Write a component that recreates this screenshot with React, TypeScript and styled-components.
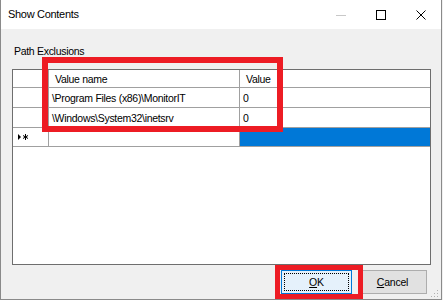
import React from "react";
import styled, { createGlobalStyle } from "styled-components";

const Global = createGlobalStyle`
  html, body { margin: 0; padding: 0; background: #f0f0f0; }
  body { font-family: "Liberation Sans", Arial, sans-serif; font-size: 10.5px; color: #000; }
`;

const Window = styled.div`
  position: relative;
  width: 442px;
  height: 300px;
  box-sizing: border-box;
  border: 1px solid #8a8a8a;
  border-top: none;
  display: flex;
  flex-direction: column;
  background: #f0f0f0;
  overflow: hidden;
`;

const TitleBar = styled.div`
  height: 29px;
  flex: none;
  background: #fff;
  display: flex;
  align-items: center;
  padding-left: 7px;
`;

const Title = styled.div`
  flex: 1;
  font-size: 11px;
  letter-spacing: -0.3px;
  line-height: 14px;
  margin-top: -1px;
`;

const CaptionButton = styled.div`
  width: 40px;
  height: 29px;
  display: flex;
  align-items: center;
  justify-content: center;
`;

const Body = styled.div`
  flex: 1;
  display: flex;
  flex-direction: column;
  padding: 15px 10px 0 11px;
`;

const Label = styled.div`
  font-size: 10.5px;
  letter-spacing: -0.3px;
  line-height: 14px;
  margin-left: 2px;
  margin-bottom: 11px;
`;

const Grid = styled.div`
  width: 419px;
  height: 196px;
  box-sizing: border-box;
  border: 1px solid #6e6e6e;
  background: #fff;
  display: grid;
  grid-template-columns: 36px 191px 190px;
  grid-template-rows: 18px 20px 20px 19px 1fr;
  align-content: start;
  font-size: 10.5px;
  letter-spacing: -0.3px;
`;

const Cell = styled.div<{ $last?: boolean; $header?: boolean; $selected?: boolean }>`
  box-sizing: border-box;
  border-right: ${(p) => (p.$last ? "none" : "1px solid #a0a0a0")};
  border-bottom: 1px solid #a0a0a0;
  background: ${(p) => (p.$selected ? "#0078d7" : "#fff")};
  padding-left: ${(p) => (p.$header ? "6px" : "3px")};
  display: flex;
  align-items: center;
  white-space: nowrap;
  overflow: hidden;
  line-height: 14px;
`;

const RowHead = styled(Cell)`
  padding-left: 4px;
`;

const Footer = styled.div`
  display: flex;
  justify-content: flex-end;
  gap: 6px;
  padding-top: 5px;
  padding-right: 4px;
`;

const Button = styled.div<{ $default?: boolean }>`
  position: relative;
  width: ${(p) => (p.$default ? "71px" : "69px")};
  height: 24px;
  box-sizing: border-box;
  border: 1px solid ${(p) => (p.$default ? "#0078d7" : "#adadad")};
  background: ${(p) => (p.$default ? "#e5f1fb" : "#e1e1e1")};
  display: flex;
  align-items: center;
  justify-content: center;
  font-size: 10.5px;
  letter-spacing: -0.2px;
  line-height: 14px;
`;

const Focus = styled.div`
  position: absolute;
  inset: 2px;
  border: 1px dotted #000;
`;

const Highlight = styled.div<{ $w: number }>`
  position: absolute;
  box-sizing: border-box;
  border: ${(p) => p.$w}px solid #ed1c24;
  pointer-events: none;
`;

const Grip = styled.svg`
  position: absolute;
  right: 2px;
  bottom: 1px;
`;

const NewRowGlyph = () => (
  <svg width="12" height="8" viewBox="0 0 12 8">
    <path d="M1 1 L4 4 L1 7 Z" fill="#000" />
    <path d="M8.5 1 V7 M6 2.5 L11 5.5 M11 2.5 L6 5.5" stroke="#000" strokeWidth="1" />
  </svg>
);

export default function App() {
  return (
    <>
      <Global />
      <Window>
        <TitleBar>
          <Title>Show Contents</Title>
          <CaptionButton>
            <svg width="10" height="10" viewBox="0 0 10 10">
              <path d="M0 5.5 H10" stroke="#c8c8c8" strokeWidth="1" />
            </svg>
          </CaptionButton>
          <CaptionButton>
            <svg width="10" height="10" viewBox="0 0 10 10">
              <rect x="0.5" y="0.5" width="9" height="9" fill="none" stroke="#000" strokeWidth="1" />
            </svg>
          </CaptionButton>
          <CaptionButton>
            <svg width="10" height="10" viewBox="0 0 10 10">
              <path d="M0.5 0.5 L9.5 9.5 M9.5 0.5 L0.5 9.5" stroke="#000" strokeWidth="1" />
            </svg>
          </CaptionButton>
        </TitleBar>
        <Body>
          <Label>Path Exclusions</Label>
          <Grid>
            <RowHead />
            <Cell $header>Value name</Cell>
            <Cell $header $last>Value</Cell>

            <RowHead />
            <Cell>\Program Files (x86)\MonitorIT</Cell>
            <Cell $last>0</Cell>

            <RowHead />
            <Cell>\Windows\System32\inetsrv</Cell>
            <Cell $last>0</Cell>

            <RowHead>
              <NewRowGlyph />
            </RowHead>
            <Cell />
            <Cell $last $selected />
          </Grid>
          <Footer>
            <Button $default>
              <Focus />
              <span>
                <u>O</u>K
              </span>
            </Button>
            <Button>
              <span>
                <u>C</u>ancel
              </span>
            </Button>
          </Footer>
        </Body>
        <Highlight $w={6} style={{ left: 41, top: 57, width: 241, height: 75 }} />
        <Highlight $w={5} style={{ left: 274, top: 265, width: 88, height: 34 }} />
        <Grip width="8" height="8" viewBox="0 0 8 8">
          <rect x="6" y="0" width="1" height="1" fill="#b0b0b0" />
          <rect x="3" y="3" width="1" height="1" fill="#b0b0b0" />
          <rect x="6" y="3" width="1" height="1" fill="#b0b0b0" />
          <rect x="0" y="6" width="1" height="1" fill="#b0b0b0" />
          <rect x="3" y="6" width="1" height="1" fill="#b0b0b0" />
          <rect x="6" y="6" width="1" height="1" fill="#b0b0b0" />
        </Grip>
      </Window>
    </>
  );
}
